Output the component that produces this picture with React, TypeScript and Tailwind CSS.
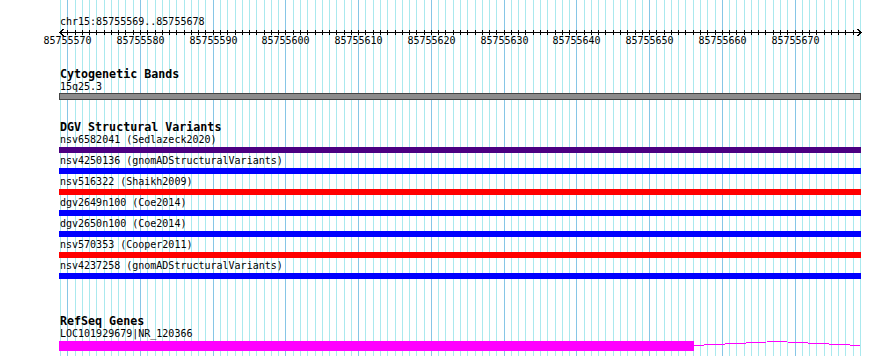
import React from "react";

const START = 85755569;
const STEP = 800 / 110;
const XS = Array.from({ length: 111 }, (_, i) => Math.round(60 + i * STEP));

function Grid() {
  return (
    <svg className="absolute inset-0" width={890} height={356} shapeRendering="crispEdges">
      {XS.map((x, i) => (
        <line
          key={i}
          x1={x + 0.5}
          x2={x + 0.5}
          y1={0}
          y2={356}
          stroke={(START + i) % 10 === 0 ? "#86c6e6" : "#aae9ee"}
          strokeWidth={1}
        />
      ))}
    </svg>
  );
}

function Ruler() {
  return (
    <svg width={890} height={18} className="block" shapeRendering="crispEdges">
      <line x1={60} x2={861} y1={4.5} y2={4.5} stroke="#000" strokeWidth={1} />
      {XS.slice(1, 110).map((x, i) => (
        <line key={i} x1={x + 0.5} x2={x + 0.5} y1={1.5} y2={7} stroke="#000" strokeWidth={1} />
      ))}
      <polyline points="63.5,1 60,4.5 63.5,8" fill="none" stroke="#000" strokeWidth={1} />
      <polyline points="857.5,1 861,4.5 857.5,8" fill="none" stroke="#000" strokeWidth={1} />
      {XS.map((x, i) =>
        (START + i) % 10 === 0 ? (
          <text
            key={i}
            x={x + 0.5}
            y={16}
            textAnchor="middle"
            fontFamily="'DejaVu Sans Mono', monospace"
            fontSize={10}
            fill="#000"
          >
            {START + i}
          </text>
        ) : null
      )}
    </svg>
  );
}

const variants: { label: string; color: string }[] = [
  { label: "nsv6582041 (Sedlazeck2020)", color: "bg-[#4b0082]" },
  { label: "nsv4250136 (gnomADStructuralVariants)", color: "bg-[#0000ff]" },
  { label: "nsv516322 (Shaikh2009)", color: "bg-[#ff0000]" },
  { label: "dgv2649n100 (Coe2014)", color: "bg-[#0000ff]" },
  { label: "dgv2650n100 (Coe2014)", color: "bg-[#0000ff]" },
  { label: "nsv570353 (Cooper2011)", color: "bg-[#ff0000]" },
  { label: "nsv4237258 (gnomADStructuralVariants)", color: "bg-[#0000ff]" },
];

function Title({ children, className = "" }: { children: React.ReactNode; className?: string }) {
  return (
    <div className={"pl-[60px] h-[13px] text-[11.67px] leading-[13px] font-bold whitespace-pre " + className}>
      {children}
    </div>
  );
}

function Small({ children }: { children: React.ReactNode }) {
  return <div className="pl-[60px] h-[12px] text-[10px] leading-[12px] whitespace-pre">{children}</div>;
}

export default function App() {
  return (
    <div className="relative w-[890px] h-[356px] overflow-hidden bg-white">
      <Grid />
      <div className="relative flex flex-col pt-[16px] font-['DejaVu_Sans_Mono',monospace] text-black">
        <Small>chr15:85755569..85755678</Small>
        <Ruler />

        <Title className="mt-[22px]">Cytogenetic Bands</Title>
        <Small>15q25.3</Small>
        <div className="ml-[59px] w-[802px] h-[7px] bg-[#8c8c8c] border border-[#444444]" />

        <Title className="mt-[21px]">DGV Structural Variants</Title>
        {variants.map((v) => (
          <div key={v.label} className="flex flex-col pb-[2px]">
            <Small>{v.label}</Small>
            <div className={"ml-[59px] mt-px w-[802px] h-[6px] " + v.color} />
          </div>
        ))}

        <Title className="mt-[34px]">RefSeq Genes</Title>
        <Small>LOC101929679|NR_120366</Small>
        <div className="flex mt-px ml-[59px] h-[10px]">
          <div className="w-[635px] h-[10px] bg-[#ff00ff]" />
          <svg width={167} height={10} className="block" shapeRendering="crispEdges">
            <polyline points="0,4.5 83,0.5 166,4.5" fill="none" stroke="#ff00ff" strokeWidth={1} />
          </svg>
        </div>
      </div>
    </div>
  );
}
